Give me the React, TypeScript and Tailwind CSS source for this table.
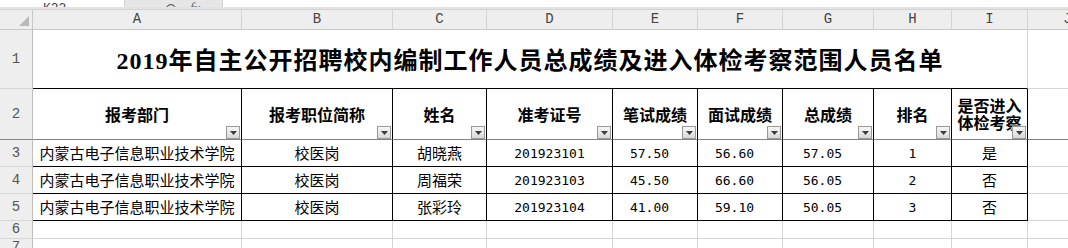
import { Search } from "lucide-react";

const CJK = "font-['Noto_Sans_CJK_SC',sans-serif]";
const MONO = "font-['Liberation_Mono','Noto_Sans_CJK_SC',monospace]";
const NUM = "font-['DejaVu_Sans_Mono',monospace]";

// column widths (A..J), spelled out so Tailwind picks them up
const columns = [
  { letter: "A", w: "w-[209px]" },
  { letter: "B", w: "w-[151px]" },
  { letter: "C", w: "w-[94px]" },
  { letter: "D", w: "w-[126px]" },
  { letter: "E", w: "w-[85px]" },
  { letter: "F", w: "w-[85px]" },
  { letter: "G", w: "w-[91px]" },
  { letter: "H", w: "w-[78px]" },
  { letter: "I", w: "w-[76px]" },
  { letter: "J", w: "w-[80px]" },
];

const headers = [
  "报考部门",
  "报考职位简称",
  "姓名",
  "准考证号",
  "笔试成绩",
  "面试成绩",
  "总成绩",
  "排名",
  "是否进入体检考察",
];

const rows = [
  ["内蒙古电子信息职业技术学院", "校医岗", "胡晓燕", "201923101", "57.50", "56.60", "57.05", "1", "是"],
  ["内蒙古电子信息职业技术学院", "校医岗", "周福荣", "201923103", "45.50", "66.60", "56.05", "2", "否"],
  ["内蒙古电子信息职业技术学院", "校医岗", "张彩玲", "201923104", "41.00", "59.10", "50.05", "3", "否"],
];

const numericCols = new Set([3, 4, 5, 6, 7]);
// score columns sit a little left of centre (number format padding)
const scoreCols = new Set([4, 5, 6]);

function RowHeader({
  num,
  height,
  bottom = "border-b-[#d6d6d6]",
}: {
  num: number;
  height: string;
  bottom?: string;
}) {
  return (
    <div
      className={`flex w-[33px] shrink-0 items-center justify-center border-r border-b border-r-[#bdbdbd] bg-[#eeeeee] text-[14px] text-[#555] ${MONO} ${height} ${bottom}`}
    >
      {num}
    </div>
  );
}

function FilterButton() {
  return (
    <span className="absolute right-[1px] bottom-0 flex h-[13px] w-[14px] items-center justify-center border border-[#999] bg-linear-to-b from-[#f6f6f6] to-[#d9d9d9]">
      <svg width="7" height="4" viewBox="0 0 7 4">
        <path d="M0 0h7L3.5 4z" fill="#3c3c3c" />
      </svg>
    </span>
  );
}

function GridCell({ w, h, bottom }: { w: string; h: string; bottom?: string }) {
  return (
    <div
      className={`shrink-0 border-r border-b border-r-[#d6d6d6] ${bottom ?? "border-b-[#d6d6d6]"} ${w} ${h}`}
    />
  );
}

export default function App() {
  const tableCols = columns.slice(0, 9);

  return (
    <div className="h-[248px] w-[1068px] overflow-hidden bg-white text-black">
      {/* formula bar, cut off at the top */}
      <div className="flex h-[7px] overflow-hidden">
        <div className="flex w-[124px] items-end pl-[43px]">
          <span className={`mb-[-8px] text-[13px] leading-none text-[#444] ${MONO}`}>K22</span>
        </div>
        <div className="flex w-[99px] items-end gap-[12px] border-x border-[#d0d0d0] bg-[#e6e6e6] pl-[40px]">
          <Search className="mb-[-9px] h-[13px] w-[13px] text-[#666]" strokeWidth={2.2} />
          <span className="mb-[-9px] font-['Liberation_Serif',serif] text-[14px] italic leading-none text-[#666]">
            fx
          </span>
        </div>
        <div className="flex-1" />
      </div>
      <div className="h-[3px] border-b border-[#d2d2d2] bg-[#e3e3e3]" />

      {/* column letters */}
      <div className="flex h-[20px]">
        <div className="flex w-[33px] shrink-0 items-end justify-end border-r border-b border-[#c8c8c8] bg-[#eeeeee] pr-[3px] pb-[3px]">
          <svg width="10" height="10" viewBox="0 0 10 10">
            <path d="M10 0V10H0z" fill="#b9b9b9" />
          </svg>
        </div>
        {columns.map((c) => (
          <div
            key={c.letter}
            className={`flex shrink-0 items-center justify-center border-r border-b border-r-[#d3d3d3] border-b-[#c8c8c8] bg-[#eeeeee] text-[14px] text-[#444] ${MONO} ${c.w}`}
          >
            {c.letter}
          </div>
        ))}
      </div>

      {/* row 1: title */}
      <div className="flex">
        <RowHeader num={1} height="h-[59px]" />
        <div className="flex h-[59px] w-[995px] shrink-0 items-center justify-center border-r border-b border-r-[#d6d6d6] border-b-black pt-[4px] font-['Liberation_Serif','Noto_Sans_CJK_SC',serif] text-[24px] font-bold tracking-[1px]">
          2019年自主公开招聘校内编制工作人员总成绩及进入体检考察范围人员名单
        </div>
        <GridCell w="w-[80px]" h="h-[59px]" />
      </div>

      {/* row 2: headers */}
      <div className="flex">
        <RowHeader num={2} height="h-[51px]" bottom="border-b-[#62a43e]" />
        {tableCols.map((c, i) => (
          <div
            key={c.letter}
            className={`relative flex h-[51px] shrink-0 items-center justify-center border-r border-b border-r-black border-b-[#62a43e] px-[2px] text-center text-[16px] leading-[17px] font-bold ${CJK} ${c.w}`}
          >
            <span className={i === 8 ? "w-[66px] break-all pl-[1px] text-left" : ""}>{headers[i]}</span>
            <FilterButton />
          </div>
        ))}
        <GridCell w="w-[80px]" h="h-[51px]" bottom="border-b-[#62a43e]" />
      </div>

      {/* data rows */}
      {rows.map((r, ri) => (
        <div key={ri} className="flex">
          <RowHeader num={ri + 3} height="h-[27px]" />
          {tableCols.map((c, i) => (
            <div
              key={c.letter}
              className={`flex h-[27px] shrink-0 items-center justify-center border-r border-b border-black pt-[1px] ${
                numericCols.has(i) ? `${NUM} text-[13px]` : `${CJK} text-[15px]`
              } ${scoreCols.has(i) ? "pr-[11px]" : ""} ${c.w}`}
            >
              {r[i]}
            </div>
          ))}
          <GridCell w="w-[80px]" h="h-[27px]" />
        </div>
      ))}

      {/* empty rows */}
      {[6, 7].map((n) => (
        <div key={n} className="flex">
          <RowHeader num={n} height="h-[18px]" />
          {columns.map((c) => (
            <GridCell key={c.letter} w={c.w} h="h-[18px]" />
          ))}
        </div>
      ))}
    </div>
  );
}
